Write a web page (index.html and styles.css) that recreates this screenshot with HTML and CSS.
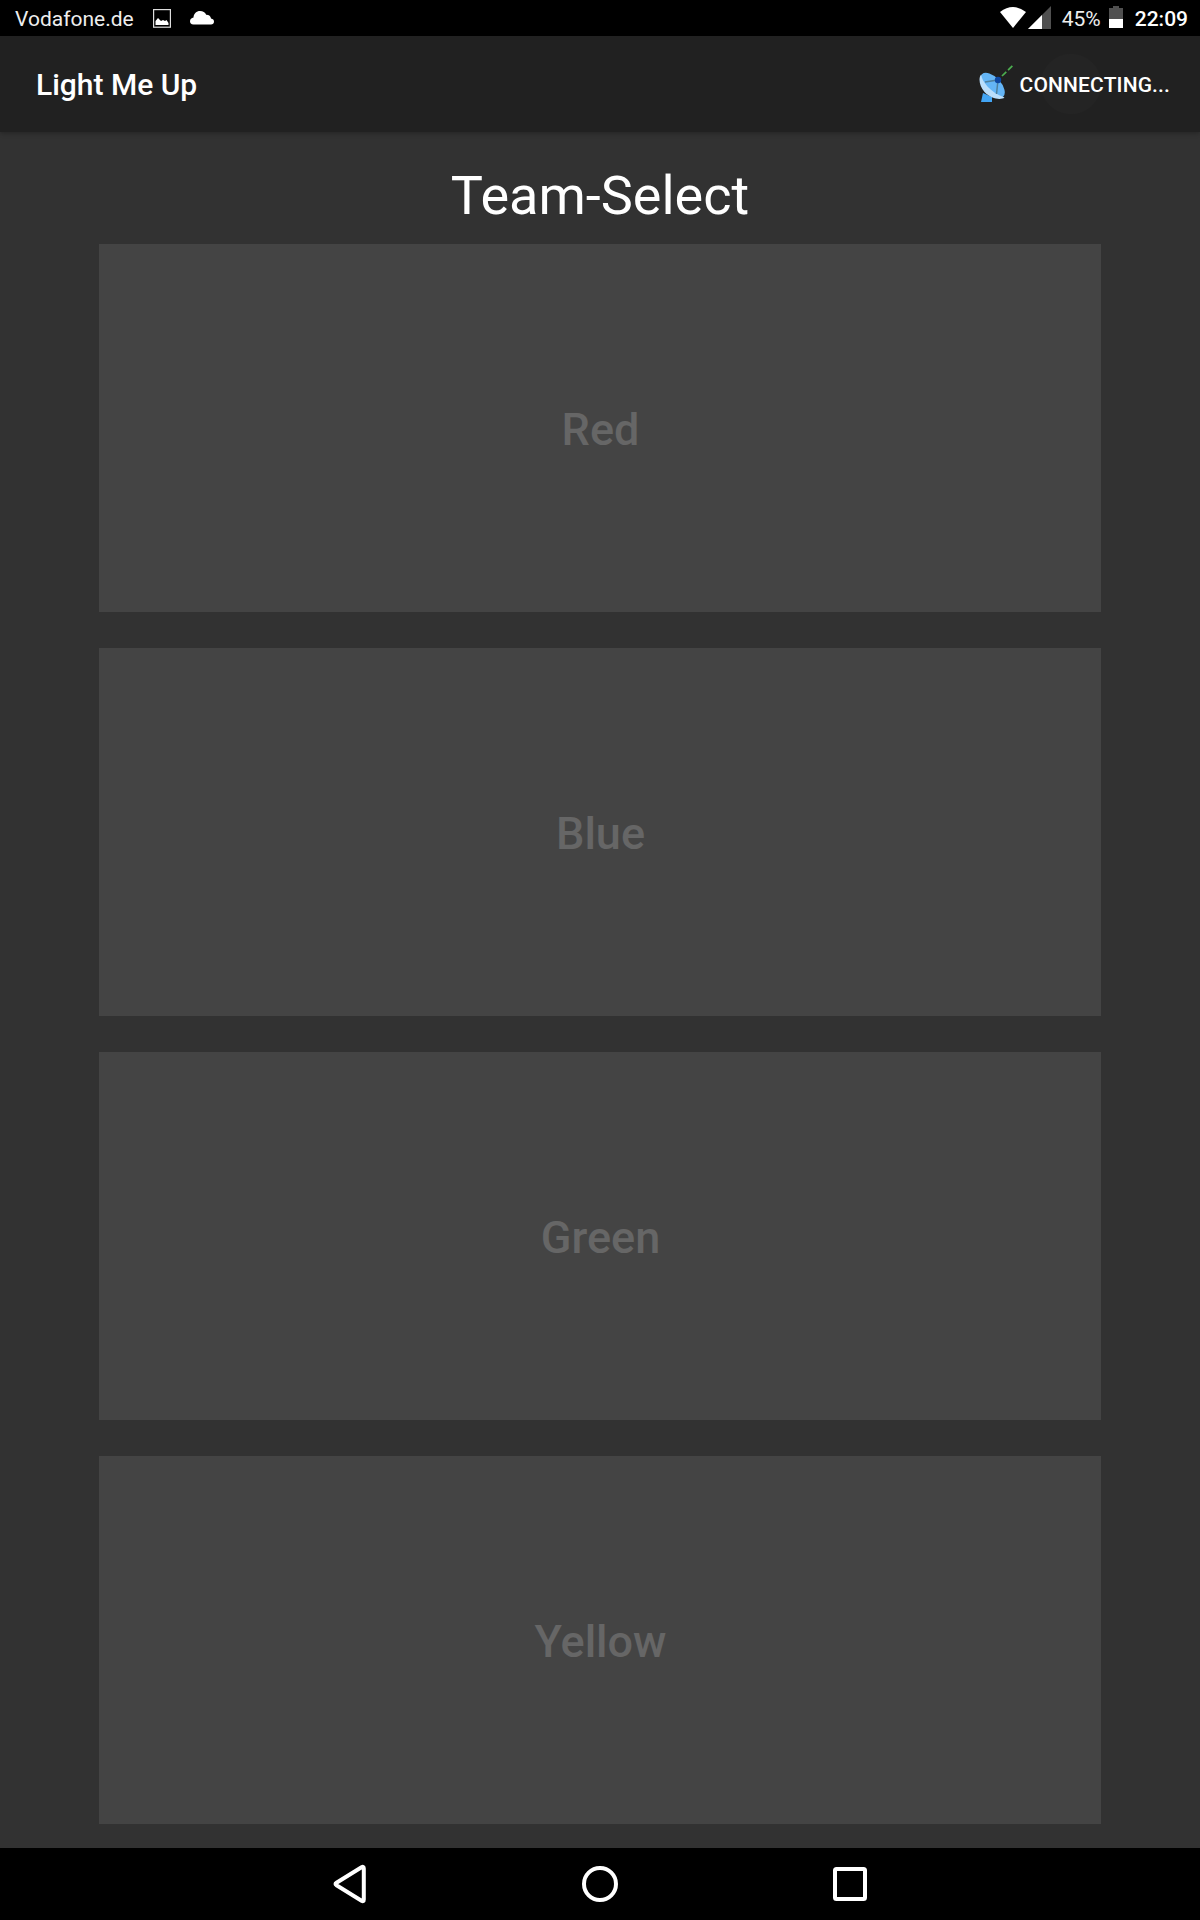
FILE: index.html
```html
<!DOCTYPE html>
<html lang="en">
<head>
<meta charset="utf-8">
<title>Light Me Up</title>
<link rel="stylesheet" href="styles.css">
</head>
<body>
<header class="status">
  <span class="carrier">Vodafone.de</span>
  <svg class="picture" width="18" height="19" viewBox="0 0 18 19"><rect x=".6" y=".6" width="16.8" height="17.6" fill="none" stroke="#ddd" stroke-width="1.2"/><path d="M2.500 16V12L5 9l3 3 2-1 2 1 1.500-1 2 3v2z" fill="#fff"/></svg>
  <svg class="cloud" width="24" height="14" viewBox="0 0 24 14"><path d="M3.500 13.500C1 13.500 0 12 0 10.200 0 8.200 1.500 7 3.500 6.500 3.800 2.500 6.500 0 10 0c3 0 5 1.300 6.200 3.700 3 .1 4.500 1.500 4.800 3.800 2 .4 3 1.500 3 3.200 0 1.600-1.200 2.800-3 2.800z" fill="#fff"/></svg>
  <svg class="signals" width="51" height="23" viewBox="0 0 51 23"><path d="M0 6Q13-4 26 6L13 22z" fill="#fff"/><path d="M51 0V23H28z" fill="#505050"/><path d="M42 9V23H28z" fill="#fff"/></svg>
  <span class="percent">45%</span>
  <svg class="battery" width="14" height="22" viewBox="0 0 14 22"><path d="M4 0h6v2h4v11H0V2h4z" fill="#505050"/><path d="M0 13h14v9H0z" fill="#fff"/></svg>
  <span class="clock">22:09</span>
</header>
<div class="toolbar">
  <h1 class="app-title">Light Me Up</h1>
  <div class="action">
    <svg class="dish" width="36" height="38" viewBox="0 0 36 38"><path d="M4 28L2 37H13V32z" fill="#42a5f5"/><ellipse cx="13.500" cy="20.500" rx="8.500" ry="15.500" transform="rotate(-43 13.500 20.500)" fill="#64b5f6"/><path d="M2.200 9.500C3 17 11 27 25.500 32.500 22 35.500 12 34 5.500 27 .5 21 -1 13 2.200 9.500z" fill="#bbdefb"/><path d="M6 17L19 15 17.500 29" fill="none" stroke="#4f7f9c" stroke-width="1.500"/><circle cx="19" cy="15" r="3.200" fill="#0d47a1"/><path d="M23 11L33.500 .7" fill="none" stroke="#4caf50" stroke-width="1.700" stroke-dasharray="6 2.500"/></svg>
    <span class="action-label">CONNECTING...</span>
  </div>
</div>
<main class="content">
  <h2 class="heading">Team-Select</h2>
  <div class="teams">
    <button class="team" disabled>Red</button>
    <button class="team" disabled>Blue</button>
    <button class="team" disabled>Green</button>
    <button class="team" disabled>Yellow</button>
  </div>
</main>
<nav class="navbar">
  <svg class="nav-icon" width="40" height="40" viewBox="0 0 40 40"><path d="M33.800 4.500Q33.800 2 31.500 3.200L6.500 18.800Q4.500 20 6.500 21.200L31.500 36.800Q33.800 38 33.800 35.500z"/></svg>
  <svg class="nav-icon" width="40" height="40" viewBox="0 0 40 40"><circle cx="20" cy="20" r="16"/></svg>
  <svg class="nav-icon" width="40" height="40" viewBox="0 0 40 40"><rect x="5" y="5" width="30" height="30" rx="1.500"/></svg>
</nav>
</body>
</html>
```

FILE: styles.css
```css
body {
  margin: 0;
  height: 1920px;
  display: flex;
  flex-direction: column;
  background: #323232;
  color: #fff;
  font-family: Roboto, sans-serif;
}
svg { display: block; flex: none; }
.status {
  height: 36px;
  box-sizing: border-box;
  padding: 0 12px 0 15px;
  display: flex;
  align-items: flex-start;
  background: #000;
  font-size: 21px;
  line-height: 39px;
  color: #eee;
}
.carrier { width: 138px; }
.picture { margin-top: 9px; }
.cloud { margin: 10.500px 0 0 19px; }
.signals { margin: 6px 11px 0 auto; }
.percent { width: 47px; }
.battery { margin: 6px 12px 0 0; }
.clock { font-weight: 500; color: #fff; }
.toolbar {
  height: 96px;
  box-sizing: border-box;
  padding: 0 30px 0 36px;
  display: flex;
  align-items: center;
  justify-content: space-between;
  background: radial-gradient(circle at 1071px 48px, #242424 29.500px, #212121 30.500px);
  box-shadow: 0 1px 5px rgba(0, 0, 0, .3);
}
.app-title { margin: 0; font-size: 30px; font-weight: 500; }
.action { display: flex; align-items: center; gap: 5px; }
.action-label {
  padding-top: 2px;
  font-size: 21px;
  font-weight: 500;
  letter-spacing: .13px;
}
.content { flex: 1; padding: 27px 99px 0; }
.heading {
  margin: 0;
  height: 85px;
  line-height: 73px;
  font-size: 54px;
  font-weight: 400;
  text-align: center;
}
.teams { display: grid; grid-auto-rows: 368px; gap: 36px; }
.team {
  border: 0;
  padding: 2px 0 0 1px;
  background: #444;
  color: #666;
  font: 500 45px Roboto, sans-serif;
}
.navbar {
  height: 72px;
  display: flex;
  align-items: center;
  justify-content: center;
  gap: 210px;
  background: #000;
}
.nav-icon { fill: none; stroke: #fff; stroke-width: 4; }
```
